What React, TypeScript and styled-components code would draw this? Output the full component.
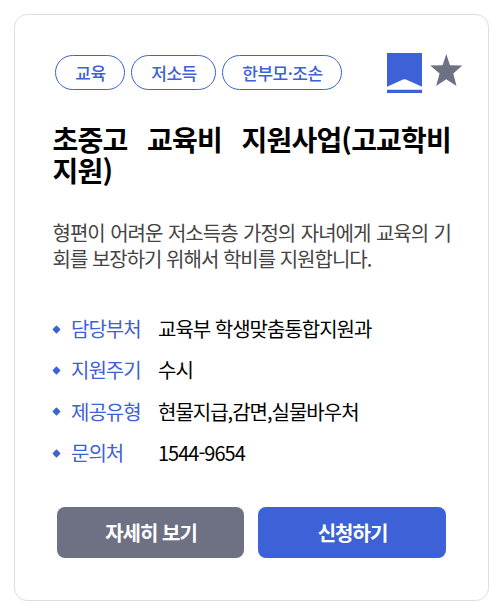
import React from "react";
import styled, { createGlobalStyle } from "styled-components";

const BLUE = "#3d61d6";
const GRAY = "#6e7084";

const GlobalStyle = createGlobalStyle`
  *, *::before, *::after { box-sizing: border-box; }
  body {
    margin: 0;
    background: #fff;
    color: #000;
    font-family: "Noto Sans CJK KR", "Noto Sans", sans-serif;
    letter-spacing: -1px;
  }
  h2, p, dl, dt, dd, ul { margin: 0; padding: 0; }
`;

const Card = styled.article`
  width: 475px;
  height: 587px;
  margin: 14px;
  padding: 38px 37px 42px;
  border: 1px solid #dedede;
  border-radius: 13px;
  display: flex;
  flex-direction: column;
`;

const Header = styled.header`
  display: flex;
  justify-content: space-between;
  height: 40px;
  margin-right: -12px;
`;

const Tags = styled.ul`
  display: flex;
  gap: 6px;
  padding: 2px 0 0 3px;
  list-style: none;
`;

const Tag = styled.li<{ $width: number }>`
  width: ${(p) => p.$width}px;
  height: 35px;
  padding-left: 1px;
  border: 1px solid ${BLUE};
  border-radius: 18px;
  color: ${BLUE};
  font-size: 17px;
  font-weight: 500;
  line-height: 34px;
  letter-spacing: -0.5px;
  text-align: center;
`;

const Icons = styled.div`
  display: flex;
  gap: 8px;
  svg { display: block; }
`;

const Title = styled.h2`
  margin-top: 31px;
  height: 64px;
  padding-left: 0.5px;
  font-size: 28px;
  font-weight: 700;
  line-height: 31px;
  letter-spacing: -0.8px;
  text-align: justify;
  word-break: keep-all;
`;

const Description = styled.p`
  margin-top: 32px;
  height: 52px;
  padding-left: 0.5px;
  color: #444;
  font-size: 20px;
  line-height: 26px;
  text-align: justify;
  word-break: break-all;
`;

const Details = styled.dl`
  display: flex;
  flex-direction: column;
  margin-top: 36.5px;
`;

const DetailRow = styled.div`
  display: grid;
  grid-template-columns: 19px 87px 1fr;
  align-items: center;
  height: 41.3px;
  font-size: 20px;
  line-height: 30px;
  dt { color: ${BLUE}; }
`;

const Buttons = styled.div`
  display: grid;
  grid-template-columns: 187px 188px;
  gap: 14px;
  margin: auto 5px 0;
`;

const Button = styled.button<{ $color: string }>`
  height: 51px;
  padding: 0 0 0 1px;
  border: 0;
  border-radius: 8px;
  background: ${(p) => p.$color};
  color: #fff;
  font: 700 20px/51px "Noto Sans CJK KR", "Noto Sans", sans-serif;
  letter-spacing: -1px;
`;

const tags = [
  { label: "교육", width: 70 },
  { label: "저소득", width: 85 },
  { label: "한부모·조손", width: 120 },
];

const details = [
  ["담당부처", "교육부 학생맞춤통합지원과"],
  ["지원주기", "수시"],
  ["제공유형", "현물지급,감면,실물바우처"],
  ["문의처", "1544-9654"],
];

export default function App() {
  return (
    <>
      <GlobalStyle />
      <Card lang="ko">
        <Header>
          <Tags>
            {tags.map((t) => (
              <Tag key={t.label} $width={t.width}>{t.label}</Tag>
            ))}
          </Tags>
          <Icons>
            <svg width="35" height="40" viewBox="0 0 35 40">
              <path d="M0 0H35V33.7L19 26.6Q17.5 25.8 16 26.6L0 33.7Z" fill={BLUE} />
              <path d="M0 36.7H35V40H0Z" fill={BLUE} />
            </svg>
            <svg width="33" height="40" viewBox="0 0 33 40">
              <path d="M16.3 1L20 12.3L32.3 12.5L23.3 20.6L26.5 33L16.3 26.3L6.1 33L9.6 20.6L0.2 12.5L12.6 12.3Z" fill={GRAY} />
            </svg>
          </Icons>
        </Header>
        <Title>초중고 교육비 지원사업(고교학비 지원)</Title>
        <Description>
          형편이 어려운 저소득층 가정의 자녀에게 교육의 기회를 보장하기 위해서 학비를 지원합니다.
        </Description>
        <Details>
          {details.map(([label, value]) => (
            <DetailRow key={label}>
              <svg width="9" height="9" viewBox="0 0 9 9">
                <path d="M4.5 1.4L7.6 4.5L4.5 7.6L1.4 4.5Z" fill={BLUE} stroke={BLUE} strokeWidth="1.6" strokeLinejoin="round" />
              </svg>
              <dt>{label}</dt>
              <dd>{value}</dd>
            </DetailRow>
          ))}
        </Details>
        <Buttons>
          <Button $color={GRAY}>자세히 보기</Button>
          <Button $color={BLUE}>신청하기</Button>
        </Buttons>
      </Card>
    </>
  );
}
